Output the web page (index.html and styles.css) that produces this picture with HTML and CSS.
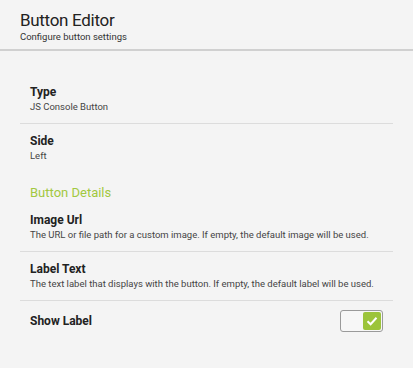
FILE: index.html
```html
<!DOCTYPE html>
<html lang="en">
<head>
    <meta charset="UTF-8">
    <meta name="viewport" content="width=device-width, initial-scale=1.0">
    <title>Button Editor</title>
    <link rel="stylesheet" href="styles.css">
</head>
<body>
    <div class="header">
        <h1>Button Editor</h1>
        <p>Configure button settings</p>
    </div>

    <div class="list">
        <div class="item">
            <div class="item-title">Type</div>
            <div class="item-desc">JS Console Button</div>
        </div>
        <div class="item">
            <div class="item-title">Side</div>
            <div class="item-desc">Left</div>
        </div>

        <div class="group-title">Button Details</div>

        <div class="item">
            <div class="item-title">Image Url</div>
            <div class="item-desc">The URL or file path for a custom image. If empty, the default image will be used.</div>
        </div>
        <div class="item">
            <div class="item-title">Label Text</div>
            <div class="item-desc">The text label that displays with the button. If empty, the default label will be used.</div>
        </div>
        <div class="item item-toggle">
            <div class="item-title">Show Label</div>
            <div class="toggle">
                <span class="toggle-knob">
                    <svg width="12" height="10" viewBox="0 0 12 10"><path d="M1.5 5.2 L4.6 8.2 L10.5 1.8" fill="none" stroke="#fff" stroke-width="2"/></svg>
                </span>
            </div>
        </div>
    </div>
</body>
</html>
```

FILE: styles.css
```css
* { margin: 0; padding: 0; box-sizing: border-box; }
body { font-family: Roboto, "Liberation Sans", sans-serif; background: #f4f4f4; color: #222; }
.header { padding: 9px 20px 6px; border-bottom: 2px solid #d0d0d0; }
.header h1 { font-size: 17px; font-weight: 400; line-height: 22px; letter-spacing: -0.3px; color: #222; }
.header p { font-size: 9.5px; line-height: 12px; color: #333; }
.list { margin: 24px 20px 0; }
.item { padding: 10px 10px; border-bottom: 1px solid #dcdcdc; }
.item:nth-child(2), .item:last-child { border-bottom: none; }
.item-title { font-size: 12px; font-weight: 700; line-height: 15px; color: #222; }
.item-desc { font-size: 9.5px; line-height: 13px; color: #444; }
.group-title { font-size: 13px; line-height: 18px; color: #a2c83f; padding: 12px 10px 1px; }
.item-toggle { display: flex; justify-content: space-between; align-items: center; padding: 9px 10px; }
.toggle { width: 43px; height: 22px; border: 1px solid #9a9a9a; border-radius: 3px; background: #f7f7f7; display: flex; justify-content: flex-end; align-items: center; padding-right: 1px; }
.toggle-knob { width: 18px; height: 18px; background: #9cc43b; border-radius: 2px; display: flex; justify-content: center; align-items: center; }
```
